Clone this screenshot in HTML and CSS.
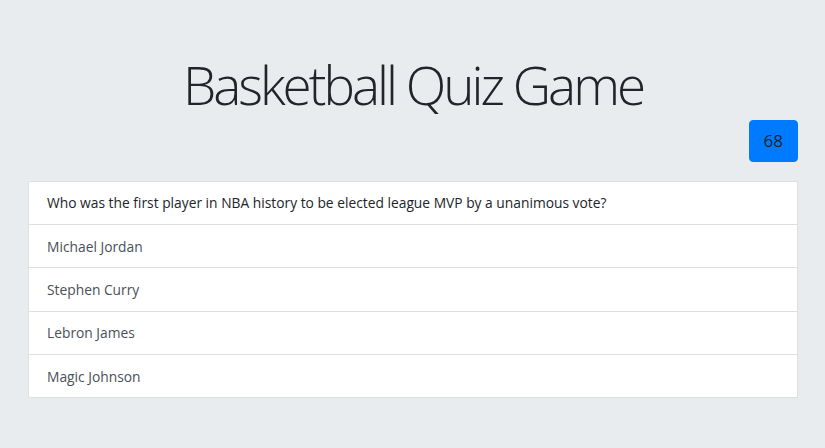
FILE: index.html
```html
<!DOCTYPE html>
<html lang="en">
<head>
<meta charset="utf-8">
<title>Basketball Quiz Game</title>
<link rel="stylesheet" href="styles.css">
</head>
<body>
<main class="page">
  <header class="header">
    <h1 class="title">Basketball Quiz Game</h1>
  </header>
  <div class="timer-row">
    <button class="timer" type="button">68</button>
  </div>
  <ul class="list">
    <li class="item question">Who was the first player in NBA history to be elected league MVP by a unanimous vote?</li>
    <li class="item answer">Michael Jordan</li>
    <li class="item answer">Stephen Curry</li>
    <li class="item answer">Lebron James</li>
    <li class="item answer">Magic Johnson</li>
  </ul>
</main>
</body>
</html>
```

FILE: styles.css
```css
html, body {
  margin: 0;
  padding: 0;
}
body {
  background: #e9ecef;
  font-family: "Open Sans", "Noto Sans", sans-serif;
  color: #212529;
}
.page {
  padding: 0 27px 0 28px;
}
.header {
  padding-top: 53px;
  text-align: center;
}
.title {
  margin: 0;
  font-family: "Open Sans", sans-serif;
  font-size: 53px;
  font-weight: 300;
  letter-spacing: -3px;
  line-height: 1.2;
  color: #212529;
}
.timer-row {
  display: flex;
  justify-content: flex-end;
  margin-top: 3px;
}
.timer {
  background: #007bff;
  border: 1px solid #007bff;
  border-radius: 4px;
  color: #212529;
  font-family: inherit;
  font-size: 17px;
  line-height: 26px;
  padding: 7px 14px;
  cursor: pointer;
}
.list {
  list-style: none;
  margin: 19px 0 0;
  padding: 0;
  background: #fff;
  border: 1px solid rgba(0,0,0,.125);
  border-radius: 2px;
}
.item {
  font-size: 13.8px;
  line-height: 21px;
  padding: 10.7px 18px;
  border-top: 1px solid rgba(0,0,0,.125);
}
.item:first-child {
  border-top: 0;
}
.question {
  color: #212529;
}
.answer {
  color: #495057;
}
```
